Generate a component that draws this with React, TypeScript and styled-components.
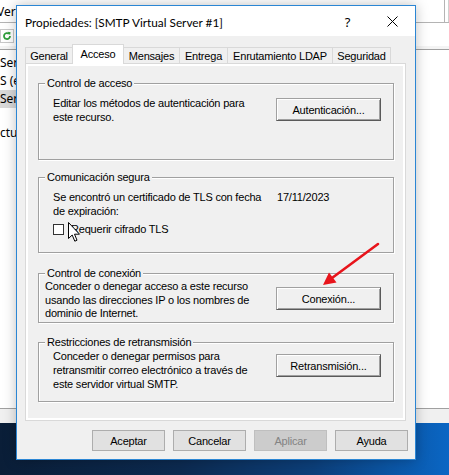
import styled, { createGlobalStyle } from "styled-components";

const GlobalStyle = createGlobalStyle`
  html, body {
    margin: 0;
    padding: 0;
  }
  body {
    width: 449px;
    height: 475px;
    overflow: hidden;
    background: #fff;
    font-family: "Liberation Sans", Arial, sans-serif;
    font-size: 11px;
    letter-spacing: -0.2px;
    color: #000;
  }
`;

const Desktop = styled.div`
  position: relative;
  width: 449px;
  height: 475px;
  display: flex;
  flex-direction: column;
  overflow: hidden;
`;

const BackWindow = styled.div`
  flex: 1;
  display: flex;
  flex-direction: column;
  background: #fff;
  font-family: "Noto Sans", sans-serif;
  font-size: 12px;
  letter-spacing: 0;
`;

const MenuBar = styled.div`
  height: 22px;
  display: flex;
  align-items: center;
  border-bottom: 1px solid #b4b4b4;
  span {
    margin-left: -3px;
  }
`;

const AddressEdge = styled.div`
  margin-left: auto;
  align-self: stretch;
  width: 3px;
  border-left: 1px solid #b4b4b4;
  border-right: 1px solid #d0d0d0;
`;

const Toolbar = styled.div`
  height: 26px;
  display: flex;
  align-items: center;
  border-bottom: 1px solid #a0a0a0;
  box-shadow: 0 -3px 0 #f4f4f4 inset;
`;

const ToolIcon = styled.div`
  width: 12px;
  height: 12px;
  border: 1px solid #c8c8c8;
  display: flex;
  align-items: center;
  justify-content: center;
  background: #fff;
`;

const List = styled.div`
  flex: 1;
  padding-top: 4px;
  display: flex;
  flex-direction: column;
`;

const ListRow = styled.div<{ $selected?: boolean; $mt?: number }>`
  height: 18px;
  line-height: 18px;
  width: 16px;
  white-space: nowrap;
  overflow: hidden;
  margin-top: ${(p) => p.$mt ?? 0}px;
  background: ${(p) => (p.$selected ? "#d9d9d9" : "transparent")};
`;

const StatusBar = styled.div`
  height: 14px;
  border-top: 1px solid #a0a0a0;
  background: #f0f0f0;
`;

const Taskbar = styled.div`
  height: 52px;
  background: linear-gradient(90deg, #0a1e38 0%, #0c2a50 40%, #0c3f7a 70%, #0a66c4 100%);
`;

const Dialog = styled.div`
  position: absolute;
  left: 16px;
  top: 5px;
  width: 400px;
  height: 455px;
  box-sizing: border-box;
  border: 1px solid #2b86d4;
  background: #f0f0f0;
  display: flex;
  flex-direction: column;
  box-shadow: 0 0 12px rgba(0, 0, 0, 0.25);
`;

const TitleBar = styled.div`
  height: 30px;
  background: #fff;
  display: flex;
  align-items: center;
  padding-left: 8px;
`;

const Title = styled.div`
  flex: 1;
  font-family: "Lato", "Noto Sans", sans-serif;
  font-size: 11.8px;
  letter-spacing: 0;
  padding-top: 2px;
`;

const Caption = styled.div`
  width: 45px;
  height: 30px;
  display: flex;
  align-items: center;
  justify-content: center;
  font-family: "Noto Sans", sans-serif;
  font-size: 13px;
  padding-top: 1px;
  box-sizing: border-box;
`;

const Body = styled.div`
  flex: 1;
  display: flex;
  flex-direction: column;
  padding: 7px 9px 0 8px;
`;

const TabRow = styled.div`
  height: 20px;
  display: flex;
  align-items: flex-end;
`;

const Tab = styled.div<{ $w: number; $active?: boolean }>`
  position: relative;
  z-index: ${(p) => (p.$active ? 2 : 1)};
  width: ${(p) => p.$w}px;
  height: ${(p) => (p.$active ? 20 : 16)}px;
  margin-left: -1px;
  margin-bottom: ${(p) => (p.$active ? -1 : 0)}px;
  box-sizing: border-box;
  border: 1px solid #d9d9d9;
  border-bottom: none;
  background: ${(p) => (p.$active ? "#fff" : "#f0f0f0")};
  display: flex;
  align-items: center;
  justify-content: center;
  white-space: nowrap;
  padding-bottom: ${(p) => (p.$active ? 2 : 0)}px;
  &:first-child {
    margin-left: 0;
  }
`;

const Panel = styled.div`
  height: 358px;
  box-sizing: border-box;
  border: 1px solid #d9d9d9;
  box-shadow: inset 0 0 0 2px #fff;
  background: #f0f0f0;
  padding: 19px 11px 0 12px;
  display: flex;
  flex-direction: column;
`;

const Group = styled.div<{ $h: number; $mt?: number }>`
  position: relative;
  height: ${(p) => p.$h}px;
  margin-top: ${(p) => p.$mt ?? 0}px;
  box-sizing: border-box;
  border: 1px solid #a0a0a0;
  box-shadow: inset 1px 1px 0 #fff, 1px 1px 0 #fff;
`;

const Legend = styled.span`
  position: absolute;
  top: -7px;
  left: 6px;
  padding: 0 2px;
  line-height: 13px;
  background: #f0f0f0;
  white-space: nowrap;
`;

const GroupBody = styled.div<{ $pt: number; $pl: number }>`
  display: flex;
  justify-content: space-between;
  align-items: flex-start;
  padding: ${(p) => p.$pt}px 12px 0 ${(p) => p.$pl}px;
`;

const Text = styled.div<{ $lh?: number }>`
  line-height: ${(p) => p.$lh ?? 14}px;
  white-space: nowrap;
`;

const InfoLine = styled.div`
  display: flex;
  line-height: 14px;
`;

const InfoText = styled.div`
  width: 224px;
  white-space: nowrap;
`;

const CheckRow = styled.div`
  display: flex;
  align-items: center;
  margin-top: 4px;
  height: 14px;
`;

const CheckBox = styled.div`
  width: 11px;
  height: 11px;
  box-sizing: border-box;
  border: 1px solid #333;
  background: #fff;
  margin-right: 7px;
`;

const ClassicButton = styled.div<{ $mt: number }>`
  width: 105px;
  height: 23px;
  margin-top: ${(p) => p.$mt}px;
  box-sizing: border-box;
  border: 1px solid;
  border-color: #a0a0a0 #5a5a5a #5a5a5a #a0a0a0;
  box-shadow: inset 1px 1px 0 #fff, inset -1px -1px 0 #a0a0a0;
  background: #f0f0f0;
  display: flex;
  align-items: center;
  justify-content: center;
  flex-shrink: 0;
`;

const Footer = styled.div`
  display: flex;
  justify-content: flex-end;
  gap: 8px;
  margin-top: 9px;
  margin-right: -2px;
`;

const FooterButton = styled.div<{ $disabled?: boolean }>`
  width: 73px;
  height: 21px;
  box-sizing: border-box;
  border: 1px solid ${(p) => (p.$disabled ? "#bfbfbf" : "#adadad")};
  background: ${(p) => (p.$disabled ? "#cccccc" : "#e1e1e1")};
  color: ${(p) => (p.$disabled ? "#838383" : "#000")};
  display: flex;
  align-items: center;
  justify-content: center;
`;

const Overlay = styled.svg<{ $x: number; $y: number }>`
  position: absolute;
  left: ${(p) => p.$x}px;
  top: ${(p) => p.$y}px;
  pointer-events: none;
  z-index: 10;
`;

const tabs = [
  { label: "General", w: 48 },
  { label: "Acceso", w: 52, active: true },
  { label: "Mensajes", w: 57 },
  { label: "Entrega", w: 49 },
  { label: "Enrutamiento LDAP", w: 106 },
  { label: "Seguridad", w: 59 },
];

export default function App() {
  return (
    <>
      <GlobalStyle />
      <Desktop>
        <BackWindow>
          <MenuBar>
            <span>Ver</span>
            <AddressEdge />
          </MenuBar>
          <Toolbar>
            <ToolIcon>
              <svg width="10" height="10" viewBox="0 0 10 10">
                <path d="M8 5a3 3 0 1 1-1-2.2" fill="none" stroke="#2e9e3a" strokeWidth="1.8" />
                <path d="M5.6 0.8L8.6 1.2L8 4.2Z" fill="#2e9e3a" />
              </svg>
            </ToolIcon>
          </Toolbar>
          <List>
            <ListRow>Serv</ListRow>
            <ListRow>S (e</ListRow>
            <ListRow $selected>Ser</ListRow>
            <ListRow $mt={16}>ctu</ListRow>
          </List>
          <StatusBar />
        </BackWindow>
        <Taskbar />

        <Dialog>
          <TitleBar>
            <Title>Propiedades: [SMTP Virtual Server #1]</Title>
            <Caption>?</Caption>
            <Caption>
              <svg width="11" height="11" viewBox="0 0 11 11">
                <path d="M0.5 0.5L10.5 10.5M10.5 0.5L0.5 10.5" stroke="#000" strokeWidth="1" />
              </svg>
            </Caption>
          </TitleBar>
          <Body>
            <TabRow>
              {tabs.map((t) => (
                <Tab key={t.label} $w={t.w} $active={t.active}>
                  {t.label}
                </Tab>
              ))}
            </TabRow>
            <Panel>
              <Group $h={77}>
                <Legend>Control de acceso</Legend>
                <GroupBody $pt={12} $pl={14}>
                  <Text>
                    Editar los métodos de autenticación para
                    <br />
                    este recurso.
                  </Text>
                  <ClassicButton $mt={2}>Autenticación...</ClassicButton>
                </GroupBody>
              </Group>

              <Group $h={76} $mt={17}>
                <Legend>Comunicación segura</Legend>
                <GroupBody $pt={12} $pl={14}>
                  <div>
                    <InfoLine>
                      <InfoText>Se encontró un certificado de TLS con fecha</InfoText>
                      <span>17/11/2023</span>
                    </InfoLine>
                    <InfoLine>de expiración:</InfoLine>
                    <CheckRow>
                      <CheckBox />
                      Requerir cifrado TLS
                    </CheckRow>
                  </div>
                </GroupBody>
              </Group>

              <Group $h={50} $mt={20}>
                <Legend>Control de conexión</Legend>
                <GroupBody $pt={6} $pl={6}>
                  <Text $lh={13.5}>
                    Conceder o denegar acceso a este recurso
                    <br />
                    usando las direcciones IP o los nombres de
                    <br />
                    dominio de Internet.
                  </Text>
                  <ClassicButton $mt={7}>Conexión...</ClassicButton>
                </GroupBody>
              </Group>

              <Group $h={60} $mt={19}>
                <Legend>Restricciones de retransmisión</Legend>
                <GroupBody $pt={6} $pl={14}>
                  <Text>
                    Conceder o denegar permisos para
                    <br />
                    retransmitir correo electrónico a través de
                    <br />
                    este servidor virtual SMTP.
                  </Text>
                  <ClassicButton $mt={5}>Retransmisión...</ClassicButton>
                </GroupBody>
              </Group>
            </Panel>
            <Footer>
              <FooterButton>Aceptar</FooterButton>
              <FooterButton>Cancelar</FooterButton>
              <FooterButton $disabled>Aplicar</FooterButton>
              <FooterButton>Ayuda</FooterButton>
            </Footer>
          </Body>
        </Dialog>

        <Overlay $x={318} $y={240} width="65" height="50" viewBox="0 0 65 50">
          <line x1="60" y1="4" x2="14" y2="38" stroke="#e8141b" strokeWidth="2.6" strokeLinecap="round" />
          <polygon points="5,45 18.5,42.5 11,32.5" fill="#e8141b" />
        </Overlay>
        <Overlay $x={67} $y={221} width="14" height="22" viewBox="0 0 14 22">
          <path
            d="M1.5 1.5L1.5 17.5L5.2 14L7.8 20.2L10 19.2L7.5 13.2L12.5 13.2Z"
            fill="#fff"
            stroke="#000"
            strokeWidth="1"
            strokeLinejoin="miter"
          />
        </Overlay>
      </Desktop>
    </>
  );
}
